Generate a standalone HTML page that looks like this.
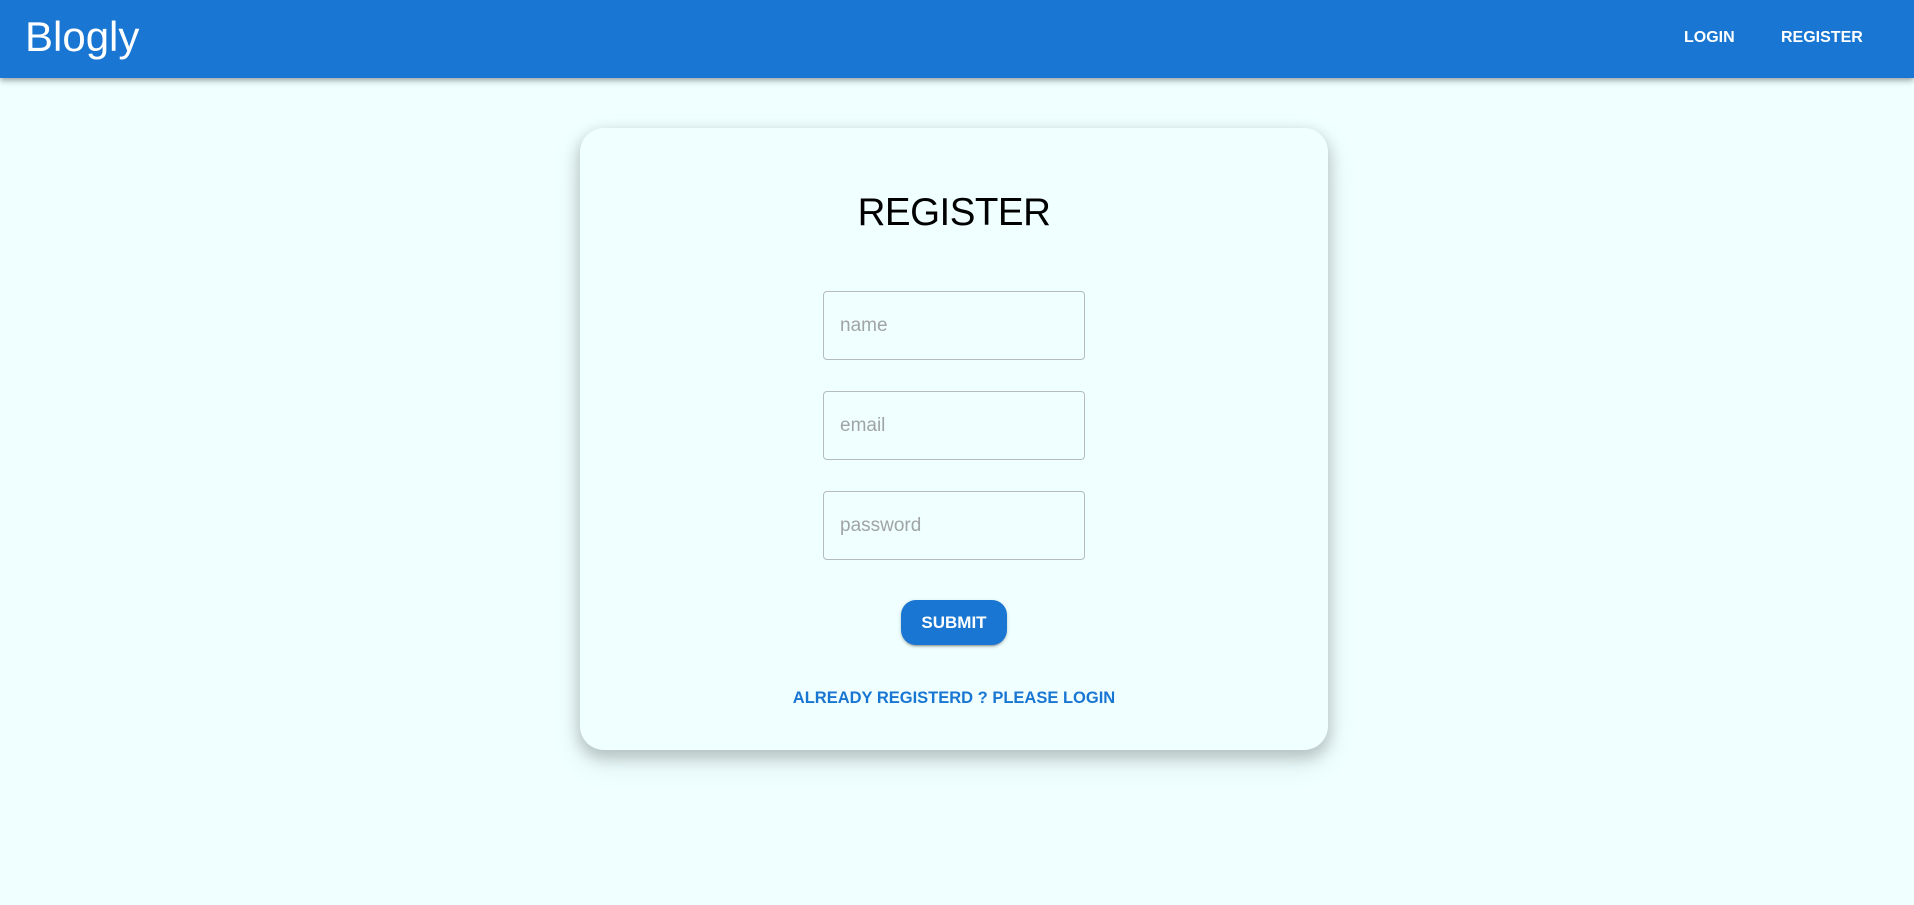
<!DOCTYPE html>
<html><head><meta charset="utf-8"><style>
html,body{margin:0;padding:0;}
body{width:1914px;height:905px;background:#f0ffff;font-family:"Liberation Sans",Arial,sans-serif;position:relative;overflow:hidden;}
.nav{position:absolute;left:0;top:0;width:1914px;height:78px;background:#1976d2;box-shadow:0 2px 4px -1px rgba(0,0,0,.2),0 4px 5px 0 rgba(0,0,0,.14),0 1px 10px 0 rgba(0,0,0,.12);}
.logo{position:absolute;left:25px;top:12px;font-size:42px;color:#fff;line-height:50px;}
.nl{position:absolute;top:28px;color:#fff;font-weight:bold;font-size:16px;line-height:20px;}
.card{position:absolute;left:580px;top:128px;width:748px;height:622px;border-radius:24px;background:#f0ffff;box-shadow:0 6px 14px 2px rgba(0,0,0,.18),0 12px 28px 4px rgba(0,0,0,.08);}
h1{position:absolute;left:0;width:748px;top:190px;margin:0;text-align:center;font-weight:normal;font-size:38.5px;line-height:46px;color:#000;letter-spacing:-0.5px;}
.in{position:absolute;left:823px;width:260px;height:67px;border:1px solid #b5bcbc;border-radius:4px;color:#a0a4a4;font-size:19px;line-height:67px;box-sizing:content-box;}
.in span{padding-left:16px;}
.btn{position:absolute;left:901px;top:600px;width:106px;height:45px;border-radius:15px;background:#1976d2;color:#fff;font-weight:bold;font-size:17px;line-height:45px;text-align:center;box-shadow:0 3px 1px -2px rgba(0,0,0,.2),0 2px 2px 0 rgba(0,0,0,.14),0 1px 5px 0 rgba(0,0,0,.12);}
.link{position:absolute;left:780px;width:348px;top:688px;text-align:center;color:#1976d2;font-size:16.5px;font-weight:bold;line-height:20px;}
</style></head><body>
<div class="nav"><div class="logo">Blogly</div>
<div class="nl" style="left:1684px">LOGIN</div>
<div class="nl" style="left:1781px">REGISTER</div></div>
<div class="card"></div>
<h1 style="left:580px">REGISTER</h1>
<div class="in" style="top:291px"><span>name</span></div>
<div class="in" style="top:391px"><span>email</span></div>
<div class="in" style="top:491px"><span>password</span></div>
<div class="btn">SUBMIT</div>
<div class="link">ALREADY REGISTERD ? PLEASE LOGIN</div>
</body></html>
